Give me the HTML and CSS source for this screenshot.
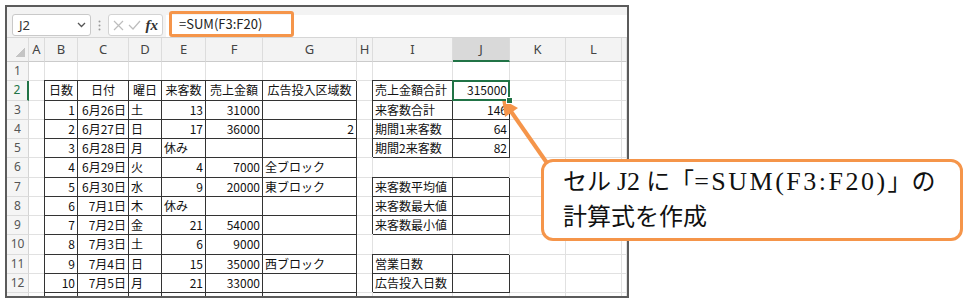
FILE: index.html
```html
<!DOCTYPE html>
<html lang="ja">
<head>
    <meta charset="UTF-8">
    <title>SUM関数</title>
    <link rel="stylesheet" href="styles.css">
</head>
<body>
    <div class="window">
        <div class="bar">
            <div class="namebox">
                <span>J2</span>
                <svg width="9" height="6" viewBox="0 0 9 6"><path d="M1 1 L4.5 4.5 L8 1" fill="none" stroke="#555" stroke-width="1.3"/></svg>
            </div>
            <div class="dots">
                <svg width="3" height="11" viewBox="0 0 3 11"><circle cx="1.5" cy="1.5" r="1" fill="#999"/><circle cx="1.5" cy="5.5" r="1" fill="#999"/><circle cx="1.5" cy="9.5" r="1" fill="#999"/></svg>
            </div>
            <div class="fxbox">
                <svg width="11" height="11" viewBox="0 0 11 11"><path d="M1 1 L10 10 M10 1 L1 10" stroke="#bdbdbd" stroke-width="1.2"/></svg>
                <svg width="13" height="10" viewBox="0 0 13 10"><path d="M1 5 L5 9 L12 1" fill="none" stroke="#bdbdbd" stroke-width="1.2"/></svg>
                <span class="fx">fx</span>
            </div>
            <div class="input">
                <div class="formula">=SUM(F3:F20)</div>
            </div>
        </div>

        <div class="row head">
            <div class="c corner"></div>
            <div class="c">A</div><div class="c">B</div><div class="c">C</div><div class="c">D</div>
            <div class="c">E</div><div class="c">F</div><div class="c">G</div><div class="c">H</div>
            <div class="c">I</div><div class="c on">J</div><div class="c">K</div><div class="c">L</div><div class="c"></div>
        </div>

        <div class="row">
            <div class="c rh">1</div>
            <div class="c"></div><div class="c"></div><div class="c"></div><div class="c"></div><div class="c"></div><div class="c"></div><div class="c"></div>
            <div class="c"></div><div class="c"></div><div class="c"></div><div class="c"></div><div class="c"></div><div class="c"></div>
        </div>
        <div class="row">
            <div class="c rh cur">2</div>
            <div class="c"></div>
            <div class="c b m">日数</div><div class="c b m">日付</div><div class="c b m">曜日</div><div class="c b m">来客数</div><div class="c b m">売上金額</div><div class="c b m">広告投入区域数</div>
            <div class="c"></div>
            <div class="c b">売上金額合計</div><div class="c b r sel">315000</div>
            <div class="c"></div><div class="c"></div><div class="c"></div>
        </div>
        <div class="row">
            <div class="c rh">3</div>
            <div class="c"></div>
            <div class="c b r">1</div><div class="c b r">6月26日</div><div class="c b">土</div><div class="c b r">13</div><div class="c b r">31000</div><div class="c b"></div>
            <div class="c"></div>
            <div class="c b">来客数合計</div><div class="c b r">146</div>
            <div class="c"></div><div class="c"></div><div class="c"></div>
        </div>
        <div class="row">
            <div class="c rh">4</div>
            <div class="c"></div>
            <div class="c b r">2</div><div class="c b r">6月27日</div><div class="c b">日</div><div class="c b r">17</div><div class="c b r">36000</div><div class="c b r">2</div>
            <div class="c"></div>
            <div class="c b">期間1来客数</div><div class="c b r">64</div>
            <div class="c"></div><div class="c"></div><div class="c"></div>
        </div>
        <div class="row">
            <div class="c rh">5</div>
            <div class="c"></div>
            <div class="c b r">3</div><div class="c b r">6月28日</div><div class="c b">月</div><div class="c b">休み</div><div class="c b"></div><div class="c b"></div>
            <div class="c"></div>
            <div class="c b">期間2来客数</div><div class="c b r">82</div>
            <div class="c"></div><div class="c"></div><div class="c"></div>
        </div>
        <div class="row">
            <div class="c rh">6</div>
            <div class="c"></div>
            <div class="c b r">4</div><div class="c b r">6月29日</div><div class="c b">火</div><div class="c b r">4</div><div class="c b r">7000</div><div class="c b">全ブロック</div>
            <div class="c"></div>
            <div class="c"></div><div class="c"></div>
            <div class="c"></div><div class="c"></div><div class="c"></div>
        </div>
        <div class="row">
            <div class="c rh">7</div>
            <div class="c"></div>
            <div class="c b r">5</div><div class="c b r">6月30日</div><div class="c b">水</div><div class="c b r">9</div><div class="c b r">20000</div><div class="c b">東ブロック</div>
            <div class="c"></div>
            <div class="c b">来客数平均値</div><div class="c b"></div>
            <div class="c"></div><div class="c"></div><div class="c"></div>
        </div>
        <div class="row">
            <div class="c rh">8</div>
            <div class="c"></div>
            <div class="c b r">6</div><div class="c b r">7月1日</div><div class="c b">木</div><div class="c b">休み</div><div class="c b"></div><div class="c b"></div>
            <div class="c"></div>
            <div class="c b">来客数最大値</div><div class="c b"></div>
            <div class="c"></div><div class="c"></div><div class="c"></div>
        </div>
        <div class="row">
            <div class="c rh">9</div>
            <div class="c"></div>
            <div class="c b r">7</div><div class="c b r">7月2日</div><div class="c b">金</div><div class="c b r">21</div><div class="c b r">54000</div><div class="c b"></div>
            <div class="c"></div>
            <div class="c b">来客数最小値</div><div class="c b"></div>
            <div class="c"></div><div class="c"></div><div class="c"></div>
        </div>
        <div class="row">
            <div class="c rh">10</div>
            <div class="c"></div>
            <div class="c b r">8</div><div class="c b r">7月3日</div><div class="c b">土</div><div class="c b r">6</div><div class="c b r">9000</div><div class="c b"></div>
            <div class="c"></div>
            <div class="c"></div><div class="c"></div>
            <div class="c"></div><div class="c"></div><div class="c"></div>
        </div>
        <div class="row">
            <div class="c rh">11</div>
            <div class="c"></div>
            <div class="c b r">9</div><div class="c b r">7月4日</div><div class="c b">日</div><div class="c b r">15</div><div class="c b r">35000</div><div class="c b">西ブロック</div>
            <div class="c"></div>
            <div class="c b">営業日数</div><div class="c b"></div>
            <div class="c"></div><div class="c"></div><div class="c"></div>
        </div>
        <div class="row">
            <div class="c rh">12</div>
            <div class="c"></div>
            <div class="c b r">10</div><div class="c b r">7月5日</div><div class="c b">月</div><div class="c b r">21</div><div class="c b r">33000</div><div class="c b"></div>
            <div class="c"></div>
            <div class="c b">広告投入日数</div><div class="c b"></div>
            <div class="c"></div><div class="c"></div><div class="c"></div>
        </div>
        <div class="row">
            <div class="c rh"></div>
            <div class="c"></div>
            <div class="c b"></div><div class="c b"></div><div class="c b"></div><div class="c b"></div><div class="c b"></div><div class="c b"></div>
            <div class="c"></div>
            <div class="c"></div><div class="c"></div>
            <div class="c"></div><div class="c"></div><div class="c"></div>
        </div>
    </div>

    <svg class="arrow" width="966" height="300" viewBox="0 0 966 300">
        <line x1="547" y1="163" x2="510" y2="110" stroke="#f5954a" stroke-width="4"/>
        <polygon points="502,99 518,108 505,117" fill="#f5954a"/>
    </svg>

    <div class="callout">
        セル <span class="latin">J2</span> に「<span class="latin wide">=SUM(F3:F20)</span>」の<br>
        計算式を作成
    </div>
</body>
</html>
```

FILE: styles.css
```css
body {
    margin: 0;
    background: #fff;
    position: relative;
    font-family: "Noto Sans CJK JP", sans-serif;
}

.window {
    margin: 5px 0 0 5px;
    width: 620px;
    height: 289px;
    border: 2px solid #5b5b5b;
    overflow: hidden;
}

/* formula bar */
.bar {
    display: flex;
    height: 30px;
    background: #f3f3f3;
    border-bottom: 1px solid #d6d6d6;
}
.namebox {
    margin: 7px 0 0 5px;
    width: 79px;
    height: 22px;
    box-sizing: border-box;
    border: 1px solid #c9c9c9;
    border-radius: 3px;
    background: #fff;
    display: flex;
    align-items: center;
    justify-content: space-between;
    padding: 0 4px 0 6px;
    font-family: "Noto Sans", sans-serif;
    font-size: 13px;
    color: #333;
}
.dots {
    width: 17px;
    margin-top: 7px;
    height: 22px;
    display: flex;
    align-items: center;
    justify-content: center;
}
.fxbox {
    margin-top: 7px;
    width: 55px;
    height: 22px;
    box-sizing: border-box;
    border: 1px solid #d3d3d3;
    border-radius: 3px;
    background: #fff;
    display: flex;
    align-items: center;
    justify-content: space-around;
    padding: 0 2px;
}
.fx {
    font-family: "Liberation Serif", serif;
    font-style: italic;
    font-weight: bold;
    font-size: 15px;
    color: #333;
}
.input {
    flex: 1;
    margin: 8px 0 0 3px;
    height: 22px;
    background: #fff;
}
.formula {
    margin: -4px 0 0 3px;
    width: 125px;
    height: 26px;
    box-sizing: border-box;
    border: 3px solid #f5954a;
    border-radius: 3px;
    padding-left: 7px;
    line-height: 20px;
    font-size: 13px;
    color: #222;
}

/* sheet grid */
.row {
    display: grid;
    grid-template-columns: 22px 16px 33px 51px 33px 44px 57px 94px 16px 80px 57px 56px 56px 5px;
    height: 19.25px;
}
.c {
    box-sizing: border-box;
    border-right: 1px solid #e1e1e1;
    border-bottom: 1px solid #e1e1e1;
    padding: 0 2px;
    font-size: 12px;
    line-height: 18px;
    color: #111;
    white-space: nowrap;
    overflow: hidden;
}
.b {
    border-right-color: #333;
    border-bottom-color: #333;
    box-shadow: -1px -1px 0 #333;
}
.r {
    text-align: right;
}
.m {
    text-align: center;
}

.head {
    height: 24px;
    background: #f3f3f3;
}
.head .c {
    border-right-color: #dcdcdc;
    border-bottom-color: #cbcbcb;
    font-family: "Noto Sans", sans-serif;
    font-size: 13px;
    line-height: 23px;
    color: #444;
    text-align: center;
}
.head .on {
    background: #d9d9d9;
    border-bottom: 2px solid #217346;
}
.corner {
    background: linear-gradient(135deg, transparent 50%, #c4c4c4 50%) right 3px bottom 4px / 9px 10px no-repeat;
}

.rh {
    background: #f5f5f5;
    border-right-color: #d4d4d4;
    border-bottom-color: #dcdcdc;
    font-family: "Noto Sans", sans-serif;
    color: #555;
    text-align: center;
}
.rh.cur {
    color: #217346;
    border-right: 2px solid #217346;
}

.sel {
    position: relative;
    z-index: 1;
    overflow: visible;
}
.sel::before {
    content: "";
    position: absolute;
    left: -1px;
    top: -1px;
    right: -1px;
    bottom: -1px;
    border: 2px solid #217346;
}
.sel::after {
    content: "";
    position: absolute;
    right: -4px;
    bottom: -4px;
    width: 5px;
    height: 5px;
    background: #217346;
    border: 1px solid #fff;
}

/* annotation */
.arrow {
    position: absolute;
    left: 0;
    top: 0;
}
.callout {
    position: absolute;
    left: 541px;
    top: 159px;
    width: 422px;
    height: 82px;
    box-sizing: border-box;
    border: 3px solid #f5954a;
    border-radius: 12px;
    background: #fff;
    padding: 2px 0 0 19px;
    font-family: "Liberation Serif", "Noto Sans CJK JP", serif;
    font-size: 24px;
    line-height: 35px;
    color: #111;
}
.latin {
    font-size: 26px;
}
.wide {
    letter-spacing: 2.5px;
}
```
